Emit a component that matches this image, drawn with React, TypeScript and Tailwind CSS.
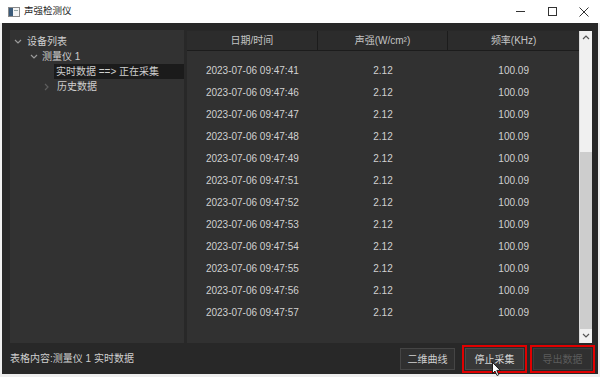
import React from "react";

const rows = ["41", "46", "47", "48", "49", "51", "52", "53", "54", "55", "56", "57"];

const font = { fontFamily: '"Liberation Sans", "Noto Sans CJK SC", sans-serif' };

function Chevron({ dir, className }: { dir: "down" | "right" | "up"; className?: string }) {
    const d = dir === "down" ? "M1 2 L4 5 L7 2" : dir === "up" ? "M1 5 L4 2 L7 5" : "M2 1 L5 4 L2 7";
    return (
        <svg width="8" height="8" viewBox="0 0 8 8" className={className}>
            <path d={d} fill="none" stroke="currentColor" strokeWidth="1.2" />
        </svg>
    );
}

export default function App() {
    return (
        <div className="w-[600px] h-[377px] bg-[#eeeeee] flex flex-col relative overflow-hidden text-[10px]" style={font}>
            {/* title bar */}
            <div className="h-[23px] bg-white flex items-center shrink-0">
                <svg width="12" height="10" viewBox="0 0 12 10" className="ml-[8px]">
                    <rect x="0.5" y="0.5" width="11" height="9" fill="#f4f4f4" stroke="#8a8a8a" />
                    <rect x="1" y="1" width="4" height="8" fill="#3b5b7a" />
                    <rect x="6" y="3" width="4" height="1" fill="#9aa" />
                </svg>
                <span className="ml-[4px] text-[9.5px] text-[#222]">声强检测仪</span>
                <div className="ml-auto flex items-center h-full">
                    <div className="w-[32px] flex justify-center">
                        <div className="w-[9px] h-px bg-[#333]" />
                    </div>
                    <div className="w-[32px] flex justify-center">
                        <div className="w-[9px] h-[9px] border border-[#333]" />
                    </div>
                    <div className="w-[32px] flex justify-center">
                        <svg width="10" height="10" viewBox="0 0 10 10">
                            <path d="M0.5 0.5 L9.5 9.5 M9.5 0.5 L0.5 9.5" stroke="#333" strokeWidth="1" />
                        </svg>
                    </div>
                </div>
            </div>

            {/* window body */}
            <div className="flex-1 bg-[#282828] ml-[2px] mr-[2px] mb-[3px] flex flex-col pl-[8px] pt-[7px]">
                <div className="flex h-[313px] gap-[3px] mr-[6px]">
                    {/* tree */}
                    <div className="w-[174px] bg-[#323232] pt-[4px] text-[#cfcfcf]">
                        <div className="flex items-center h-[15px] pl-[4px]">
                            <Chevron dir="down" className="text-[#9a9a9a]" />
                            <span className="ml-[5px]">设备列表</span>
                        </div>
                        <div className="flex items-center h-[15px] pl-[20px]">
                            <Chevron dir="down" className="text-[#9a9a9a]" />
                            <span className="ml-[4px]">测量仪 1</span>
                        </div>
                        <div className="flex items-center h-[15px] ml-[44px] bg-[#1b1b1b] pl-[2px]">
                            <span>实时数据 ==&gt; 正在采集</span>
                        </div>
                        <div className="flex items-center h-[15px] pl-[33px]">
                            <Chevron dir="right" className="text-[#5e5e5e]" />
                            <span className="ml-[6px]">历史数据</span>
                        </div>
                    </div>

                    {/* table */}
                    <div className="flex-1 flex bg-[#313131] mt-[1px]">
                        <div className="flex-1 flex flex-col">
                            <div className="grid grid-cols-3 h-[20px] bg-[#2c2c2c] border-b border-[#1c1c1c] text-[#c4c4c4]">
                                <div className="flex items-center justify-center border-r border-[#1c1c1c]">日期/时间</div>
                                <div className="flex items-center justify-center border-r border-[#1c1c1c]">声强(W/cm²)</div>
                                <div className="flex items-center justify-center">频率(KHz)</div>
                            </div>
                            <div className="pt-[8px] text-[#d0d0d0]">
                                {rows.map((s) => (
                                    <div key={s} className="grid grid-cols-3 h-[22px] items-center text-center">
                                        <div>2023-07-06 09:47:{s}</div>
                                        <div>2.12</div>
                                        <div>100.09</div>
                                    </div>
                                ))}
                            </div>
                        </div>
                        {/* scrollbar */}
                        <div className="w-[13px] bg-[#f0f0f0] flex flex-col border-l border-[#dcdcdc]">
                            <div className="h-[14px] flex items-center justify-center text-[#555]">
                                <Chevron dir="up" />
                            </div>
                            <div className="h-[107px]" />
                            <div className="h-[177px] bg-[#cdcdcd]" />
                            <div className="flex-1 flex items-center justify-center text-[#555]">
                                <Chevron dir="down" />
                            </div>
                        </div>
                    </div>
                </div>

                {/* status bar */}
                <div className="flex-1 flex items-end pr-[3px]">
                    <div className="self-center text-[#cfcfcf] pb-px">表格内容:测量仪 1 实时数据</div>
                    <div className="ml-auto flex items-center gap-[3px]">
                        <div className="p-[2px] border-2 border-transparent">
                            <div className="w-[55px] h-[22px] bg-[#303030] border border-[#454545] flex items-center justify-center text-[#d0d0d0]">
                                二维曲线
                            </div>
                        </div>
                        <div className="p-px border-2 border-[#e00000]">
                            <div className="w-[59px] h-[22px] bg-[#383838] border border-[#4a4a4a] flex items-center justify-center text-[#d6d6d6]">
                                停止采集
                            </div>
                        </div>
                        <div className="p-px border-2 border-[#e00000]">
                            <div className="w-[59px] h-[22px] bg-[#303030] border border-[#3c3c3c] flex items-center justify-center text-[#5c5c5c]">
                                导出数据
                            </div>
                        </div>
                    </div>
                </div>
            </div>

            {/* mouse cursor */}
            <svg width="10" height="15" viewBox="0 0 10 15" className="absolute left-[492px] top-[362px]">
                <path d="M0.5 0.5 L0.5 11.5 L3 9 L5 13.5 L6.8 12.7 L4.8 8.4 L8.3 8.4 Z" fill="#fff" stroke="#000" strokeWidth="0.8" />
            </svg>
        </div>
    );
}
